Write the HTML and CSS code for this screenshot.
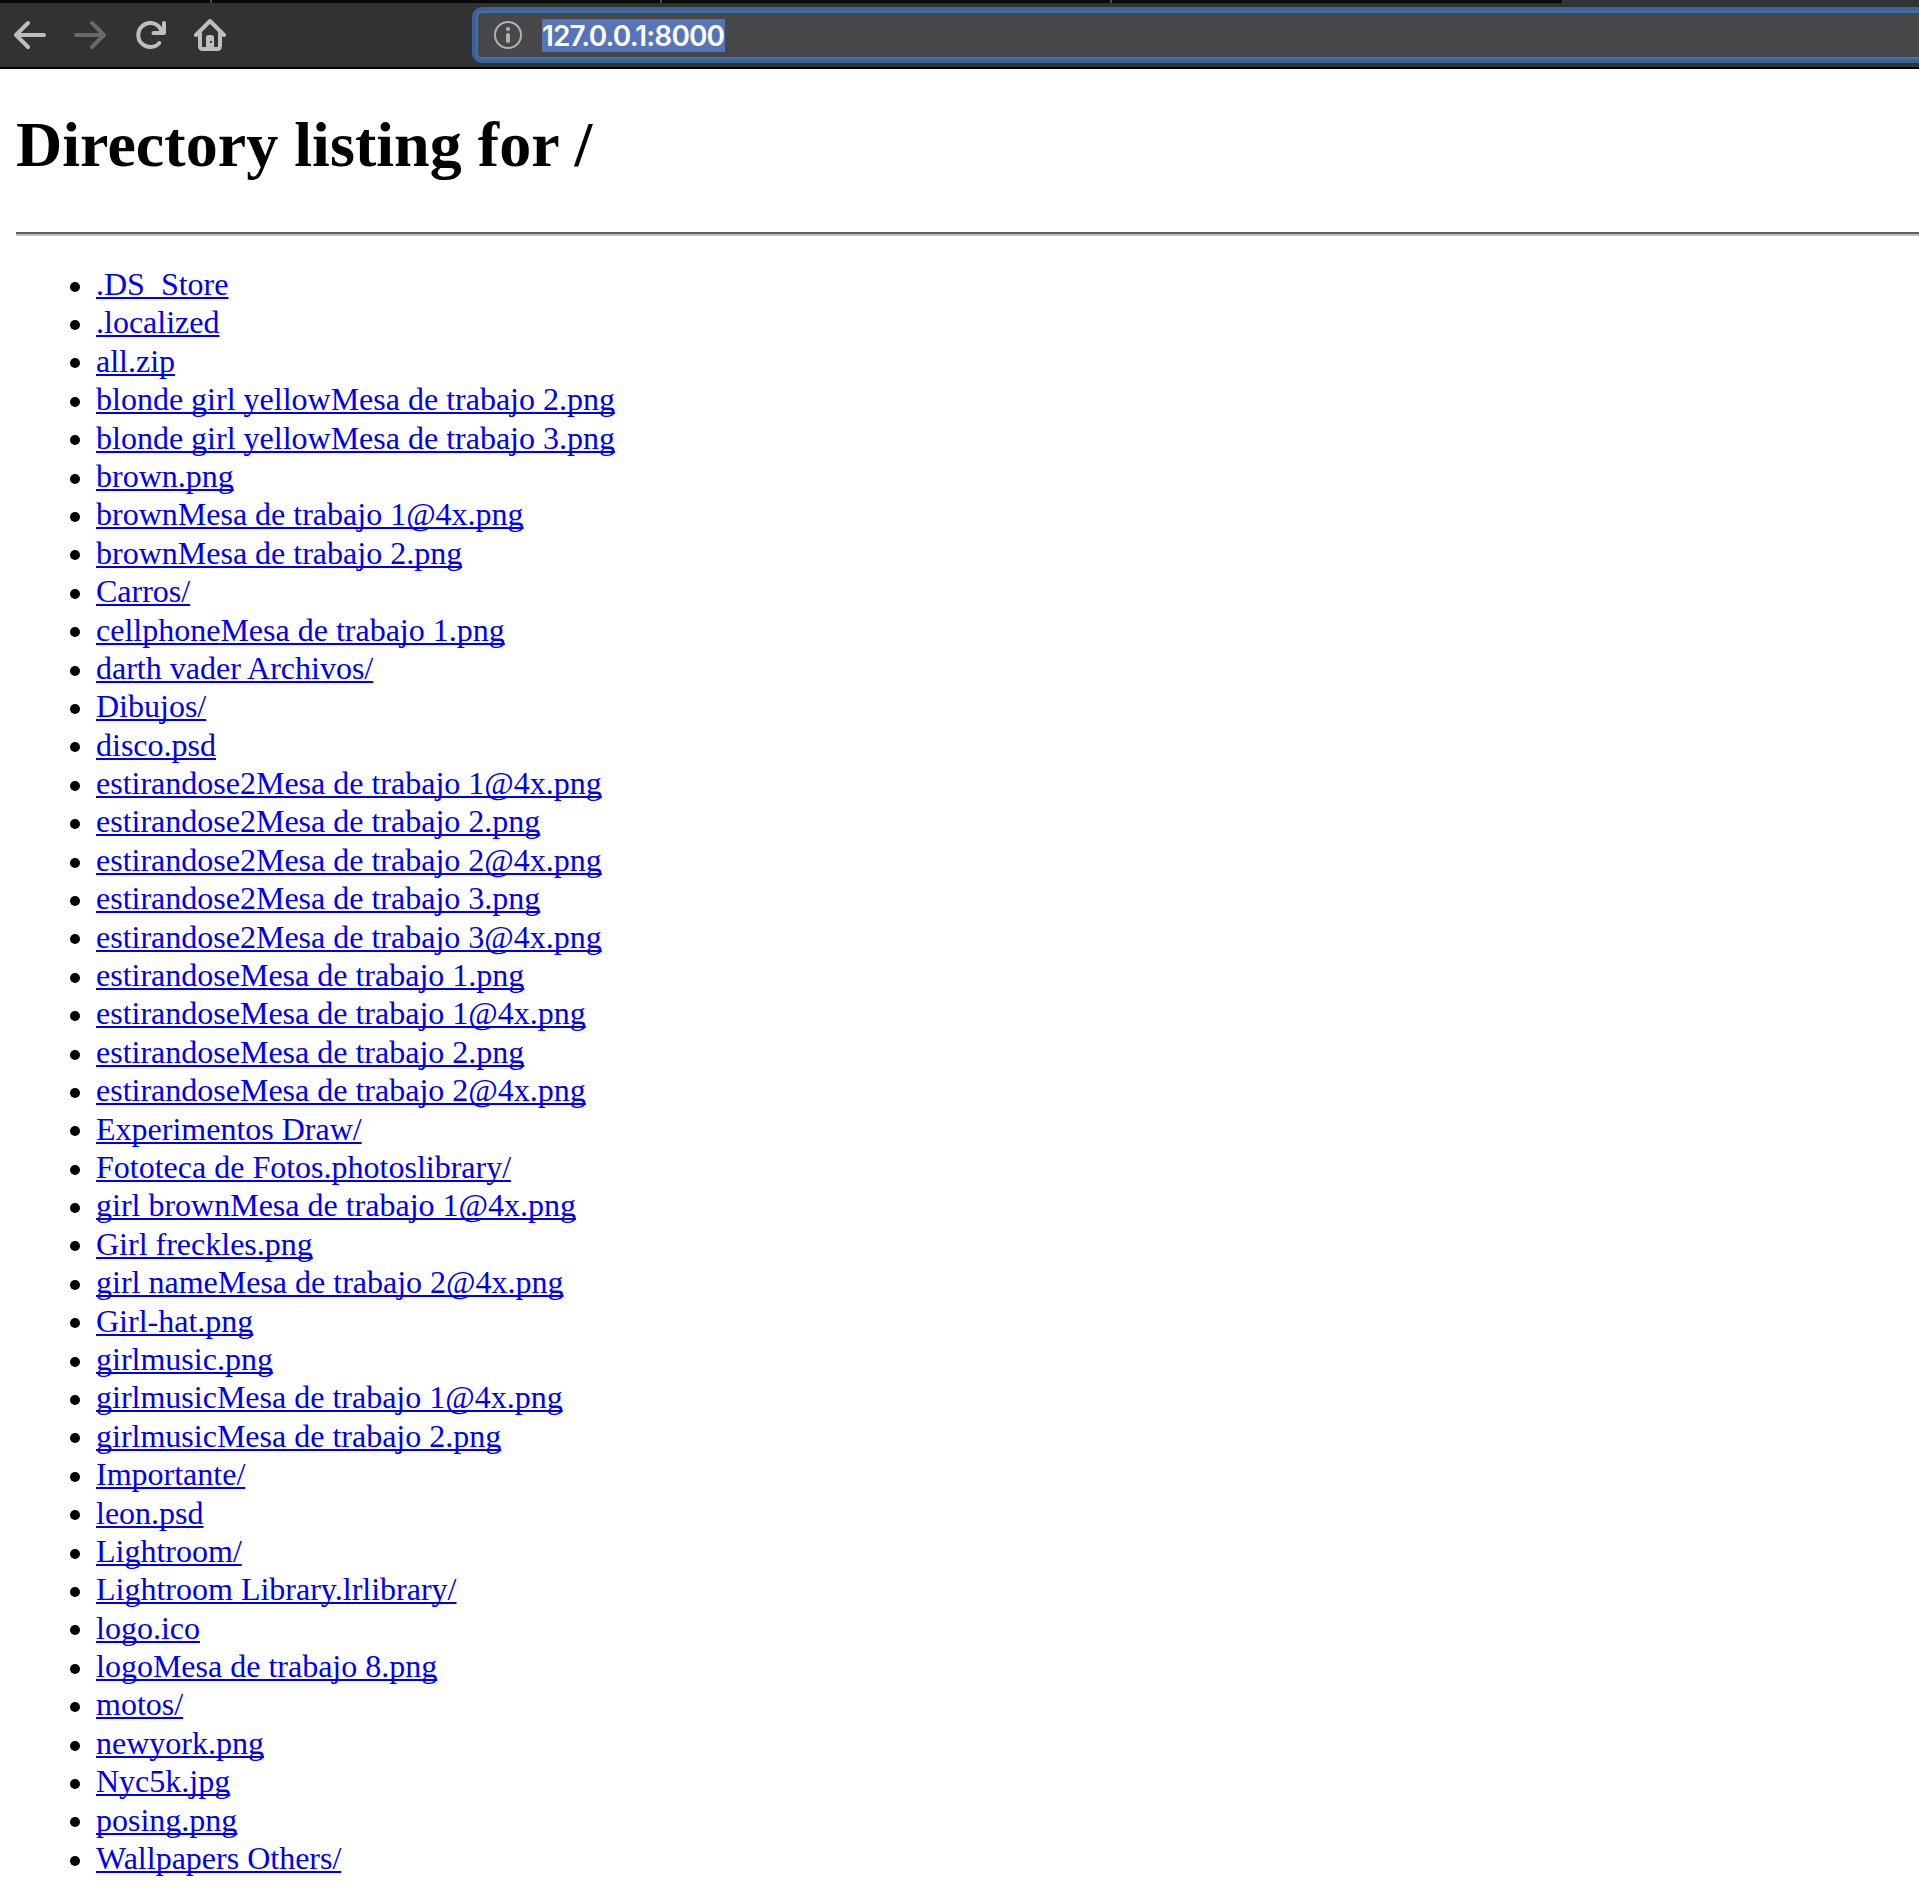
FILE: index.html
```html
<!DOCTYPE html>
<html lang="en">
<head>
<meta charset="utf-8">
<title>Directory listing for /</title>
<link rel="stylesheet" href="styles.css">
</head>
<body>
<header class="browser">
  <div class="tabs"><span class="tab tab-first"></span><span class="tab"></span><span class="tab"></span><span class="tab tab-last"></span></div>
  <nav class="toolbar">
    <div class="buttons">
      <svg class="icon" viewBox="0 0 32 32"><path d="M30 16H2M14 4L2 16l12 12"/></svg>
      <svg class="icon disabled" viewBox="0 0 32 32"><path d="M2 16h28M18 4l12 12-12 12"/></svg>
      <svg class="icon" viewBox="0 0 32 32"><path d="M25.3 24A12 12 0 1 1 25.5 8.4L29 14M30 4v10H19.5"/></svg>
      <svg class="icon" viewBox="0 0 32 32"><path d="M2 16L16 2l14 14M6 14v13q0 3 3 3h14q3 0 3-3V14"/><path class="door" fill-rule="evenodd" d="M12 30V18.500q0-2.500 2.500-2.500h3q2.500 0 2.500 2.500V30zM16 22v2h2v-2z"/></svg>
    </div>
    <div class="address">
      <svg class="info" viewBox="0 0 28 28"><circle cx="14" cy="14" r="13"/><path d="M14 14v6"/><circle class="dot" cx="14" cy="8" r="2.100"/></svg>
      <span class="url">127.0.0.1:8000</span>
    </div>
  </nav>
</header>
<main>
<h1>Directory listing for /</h1>
<hr>
<ul>
<li><a href="#">.DS_Store</a></li>
<li><a href="#">.localized</a></li>
<li><a href="#">all.zip</a></li>
<li><a href="#">blonde girl yellowMesa de trabajo 2.png</a></li>
<li><a href="#">blonde girl yellowMesa de trabajo 3.png</a></li>
<li><a href="#">brown.png</a></li>
<li><a href="#">brownMesa de trabajo 1@4x.png</a></li>
<li><a href="#">brownMesa de trabajo 2.png</a></li>
<li><a href="#">Carros/</a></li>
<li><a href="#">cellphoneMesa de trabajo 1.png</a></li>
<li><a href="#">darth vader Archivos/</a></li>
<li><a href="#">Dibujos/</a></li>
<li><a href="#">disco.psd</a></li>
<li><a href="#">estirandose2Mesa de trabajo 1@4x.png</a></li>
<li><a href="#">estirandose2Mesa de trabajo 2.png</a></li>
<li><a href="#">estirandose2Mesa de trabajo 2@4x.png</a></li>
<li><a href="#">estirandose2Mesa de trabajo 3.png</a></li>
<li><a href="#">estirandose2Mesa de trabajo 3@4x.png</a></li>
<li><a href="#">estirandoseMesa de trabajo 1.png</a></li>
<li><a href="#">estirandoseMesa de trabajo 1@4x.png</a></li>
<li><a href="#">estirandoseMesa de trabajo 2.png</a></li>
<li><a href="#">estirandoseMesa de trabajo 2@4x.png</a></li>
<li><a href="#">Experimentos Draw/</a></li>
<li><a href="#">Fototeca de Fotos.photoslibrary/</a></li>
<li><a href="#">girl brownMesa de trabajo 1@4x.png</a></li>
<li><a href="#">Girl freckles.png</a></li>
<li><a href="#">girl nameMesa de trabajo 2@4x.png</a></li>
<li><a href="#">Girl-hat.png</a></li>
<li><a href="#">girlmusic.png</a></li>
<li><a href="#">girlmusicMesa de trabajo 1@4x.png</a></li>
<li><a href="#">girlmusicMesa de trabajo 2.png</a></li>
<li><a href="#">Importante/</a></li>
<li><a href="#">leon.psd</a></li>
<li><a href="#">Lightroom/</a></li>
<li><a href="#">Lightroom Library.lrlibrary/</a></li>
<li><a href="#">logo.ico</a></li>
<li><a href="#">logoMesa de trabajo 8.png</a></li>
<li><a href="#">motos/</a></li>
<li><a href="#">newyork.png</a></li>
<li><a href="#">Nyc5k.jpg</a></li>
<li><a href="#">posing.png</a></li>
<li><a href="#">Wallpapers Others/</a></li>
</ul>
</main>
</body>
</html>
```
FILE: styles.css
```css
* { box-sizing: border-box; }
body { margin: 0; height: 1893px; overflow: hidden; background: #fff; color: #000; font-family: "Liberation Serif", serif; }

.browser { height: 69px; background: #323234; border-bottom: 2px solid #000; }
.tabs { display: flex; height: 3px; }
.tab { width: 450px; background: linear-gradient(#0c0c0d, #050505); border-right: 2px solid #4a4a4c; }
.tab-first { width: 212px; }
.tab-last { border-right: 0; }
.toolbar { display: flex; height: 64px; padding-top: 4px; }
.buttons { display: flex; gap: 28px; width: 472px; padding: 12px 0 0 14px; }
.icon { width: 32px; height: 32px; fill: none; stroke: #bebebe; stroke-width: 4; stroke-linecap: round; stroke-linejoin: round; }
.disabled { stroke: #69696b; }
.door { fill: #bebebe; stroke: none; }
.address { display: flex; align-items: center; flex: 1; height: 56px; padding-left: 18px; background: #474749; border: 4px solid #386498; border-right: 0; border-radius: 10px 0 0 10px; box-shadow: inset 0 2px #4270a8, inset 2px 0 #4270a8, inset 0 -2px #4270a8; }
.info { width: 28px; height: 28px; fill: none; stroke: #b1b1b3; stroke-width: 2; }
.info path { stroke-width: 4; stroke-linecap: round; }
.info .dot { fill: #b1b1b3; stroke: none; }
.url { width: 183px; height: 33px; margin-left: 20px; background: #5675b9; color: #fff; font: 600 28px/35px Inter, sans-serif; letter-spacing: -0.85px; white-space: nowrap; }

main { padding: 38px 0 0 16px; }
h1 { margin: 0; font-size: 64px; line-height: 76px; letter-spacing: 0.05px; }
hr { height: 4px; margin: 49px 0 29px; border: 0; border-top: 2px solid #5c5c5c; background: #bdbdbd; }
ul { margin: 0; padding: 0 0 0 54px; list-style: none; }
li { display: flex; align-items: center; height: 38.4px; font-size: 32px; line-height: 38.4px; }
li::before { content: ""; width: 10px; height: 10px; margin: 5px 16px 0 0; border-radius: 50%; background: #000; }
a { color: #0000ee; text-decoration: underline; text-decoration-thickness: 2px; text-underline-offset: 2px; text-decoration-skip-ink: none; }
```
